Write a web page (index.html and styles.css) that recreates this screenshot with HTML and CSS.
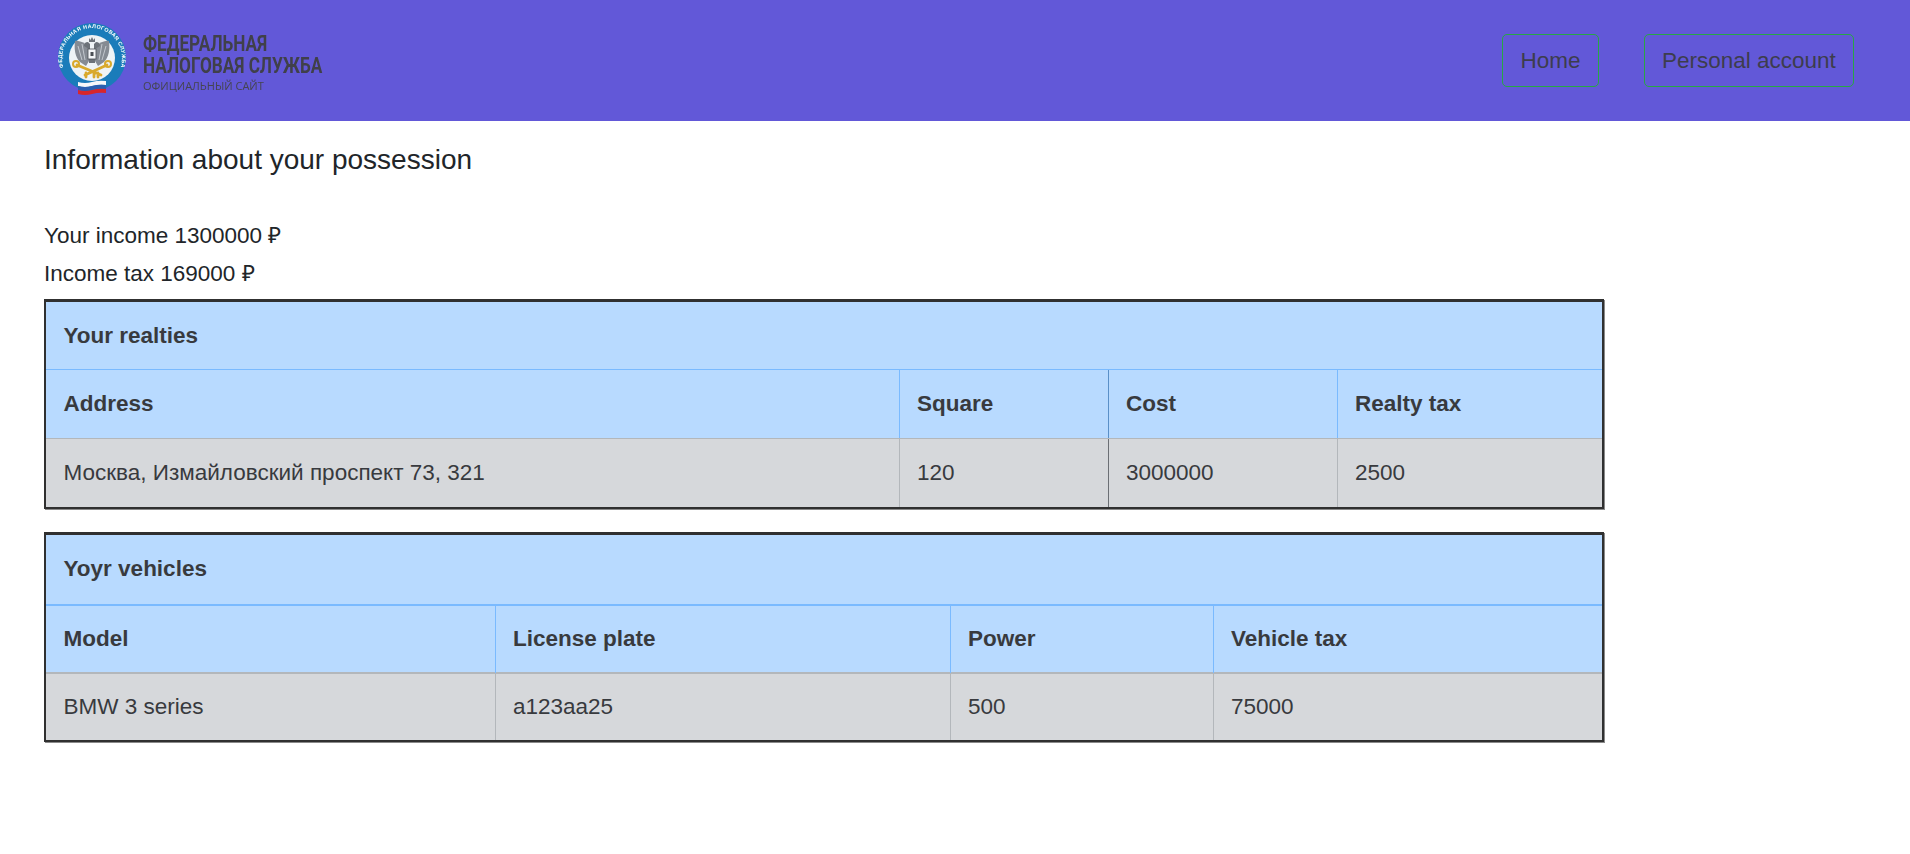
FILE: index.html
```html
<!DOCTYPE html>
<html lang="en">

<head>
    <meta charset="UTF-8">
    <meta name="viewport" content="width=device-width, initial-scale=1.0">
    <title>Information about your possession</title>
    <link rel="stylesheet" href="styles.css">
</head>

<body>
    <header class="header">
        <a class="logo" href="#">
            <svg class="logo-mark" viewBox="0 0 72 76" width="72" height="76" aria-hidden="true">
                <defs>
                    <path id="ringText" d="M14.5 57 A30 30 0 1 1 57.5 57"></path>
                </defs>
                <circle cx="36" cy="35" r="34" fill="#1a7cba"></circle>
                <circle cx="36" cy="36" r="23" fill="#eef3f6"></circle>
                <text class="ring-text"><textPath href="#ringText" startOffset="50%" text-anchor="middle">ФЕДЕРАЛЬНАЯ НАЛОГОВАЯ СЛУЖБА</textPath></text>
                <!-- eagle -->
                <path d="M33 25 C28 20 22 18 19 19 C18 27 19 35 24 40 L30 44 L33 39 Z" fill="#858b93"></path>
                <path d="M39 25 C44 20 50 18 53 19 C54 27 53 35 48 40 L42 44 L39 39 Z" fill="#858b93"></path>
                <path d="M22 24 l4 14 M26 22 l3 16 M50 24 l-4 14 M46 22 l-3 16" fill="none" stroke="#c3c8ce" stroke-width="1"></path>
                <path d="M28 24 q0 -4 4 -4 l2 2 v6 h4 v-6 l2 -2 q4 0 4 4 l-5 3 v14 h-6 v-14 z" fill="#6c7279"></path>
                <path d="M33 16 l1.5 2 l1.5 -3 l1.500 3 l1.500 -2 v4 h-6 z" fill="#6c7279"></path>
                <rect x="32" y="27" width="8" height="10" fill="#f4f6f8" stroke="#4a4f55" stroke-width="0.8"></rect>
                <rect x="34.500" y="30" width="3" height="4" fill="#4a4f55"></rect>
                <!-- keys -->
                <path d="M21 43 l24 10 M51 43 l-22 10 M38 50 v5 M42 51 v4 M30 51 v4" fill="none" stroke="#d9a92c" stroke-width="2.800" stroke-linecap="round"></path>
                <circle cx="20" cy="42" r="3" fill="none" stroke="#d9a92c" stroke-width="2"></circle>
                <circle cx="52" cy="42" r="3" fill="none" stroke="#d9a92c" stroke-width="2"></circle>
                <!-- flag -->
                <path d="M22 60 q7 2 14 0 t14 -1 v4 q-7 -1 -14 1 t-14 0 z" fill="#f7f8fa"></path>
                <path d="M22 64 q7 2 14 0 t14 -1 v4 q-7 -1 -14 1 t-14 0 z" fill="#2b5fb0"></path>
                <path d="M22 68 q7 2 14 0 t14 -1 v4 q-7 -1 -14 1 t-14 0 z" fill="#d8262c"></path>
            </svg>
            <div class="logo-text">
                <span class="logo-title">ФЕДЕРАЛЬНАЯ</span>
                <span class="logo-title">НАЛОГОВАЯ СЛУЖБА</span>
                <span class="logo-sub">ОФИЦИАЛЬНЫЙ САЙТ</span>
            </div>
        </a>
        <nav class="nav">
            <a class="nav-btn" href="#">Home</a>
            <a class="nav-btn" href="#">Personal account</a>
        </nav>
    </header>

    <main class="content">
        <h1 class="page-title">Information about your possession</h1>
        <p class="summary">Your income 1300000 ₽</p>
        <p class="summary">Income tax 169000 ₽</p>

        <table class="tax-table">
            <colgroup>
                <col class="col-address">
                <col class="col-square">
                <col class="col-cost">
                <col class="col-realty">
            </colgroup>
            <thead>
                <tr>
                    <th colspan="4">Your realties</th>
                </tr>
                <tr>
                    <th>Address</th>
                    <th class="dark-edge">Square</th>
                    <th>Cost</th>
                    <th>Realty tax</th>
                </tr>
            </thead>
            <tbody>
                <tr>
                    <td>Москва, Измайловский проспект 73, 321</td>
                    <td class="dark-edge">120</td>
                    <td>3000000</td>
                    <td>2500</td>
                </tr>
            </tbody>
        </table>

        <table class="tax-table tax-table-wide-line">
            <colgroup>
                <col class="col-model">
                <col class="col-plate">
                <col class="col-power">
                <col class="col-vehicle">
            </colgroup>
            <thead>
                <tr>
                    <th colspan="4">Yoyr vehicles</th>
                </tr>
                <tr>
                    <th>Model</th>
                    <th>License plate</th>
                    <th>Power</th>
                    <th>Vehicle tax</th>
                </tr>
            </thead>
            <tbody>
                <tr>
                    <td>BMW 3 series</td>
                    <td>a123aa25</td>
                    <td>500</td>
                    <td>75000</td>
                </tr>
            </tbody>
        </table>
    </main>
</body>
</html>
```

FILE: styles.css
```css
* {
    box-sizing: border-box;
    margin: 0;
    padding: 0;
}

body {
    font-family: "Liberation Sans", Arial, sans-serif;
    font-size: 22.5px;
    line-height: 1.5;
    color: #212529;
    background-color: #fff;
}

a {
    text-decoration: none;
}

/* Header */
.header {
    height: 121px;
    padding: 0 56px 0 56px;
    background-color: #6258d8;
    display: flex;
    align-items: center;
    justify-content: space-between;
}

.logo {
    display: flex;
    align-items: center;
    gap: 15px;
    color: #40404a;
    filter: blur(0.4px);
}

.logo-mark {
    display: block;
    margin-top: -2px;
}

.ring-text {
    font-family: "Liberation Sans", Arial, sans-serif;
    font-size: 5.4px;
    font-weight: bold;
    letter-spacing: 0.35px;
    fill: #fff;
}

.logo-text {
    display: flex;
    flex-direction: column;
    margin-top: 4px;
}

.logo-title {
    font-family: "Roboto", sans-serif;
    font-size: 22px;
    font-weight: 700;
    line-height: 22px;
    transform: scaleX(0.78);
    transform-origin: left center;
    white-space: nowrap;
}

.logo-sub {
    font-family: "Open Sans", sans-serif;
    font-size: 11px;
    line-height: 15px;
    margin-top: 1px;
    color: #45454f;
    white-space: nowrap;
}

.nav {
    display: flex;
    gap: 45px;
}

.nav-btn {
    display: block;
    padding: 8.5px 17.2px;
    color: #3d3d4d;
    border: 1px solid #28a745;
    border-radius: 5px;
}

/* Content */
.content {
    padding: 0 44px;
}

.page-title {
    font-size: 28px;
    font-weight: 400;
    line-height: 42px;
    margin-top: 18px;
    margin-bottom: 36px;
}

.summary {
    line-height: 38px;
}

.tax-table {
    width: 1558px;
    table-layout: fixed;
    border-collapse: collapse;
    border: 2px solid #303030;
    border-top-width: 3px;
    box-shadow: 1px 1px 0 #8a8a8a;
    margin-top: 6px;
    margin-bottom: 23px;
    color: #383a3e;
}

.tax-table th,
.tax-table td {
    height: 69px;
    padding: 0 17.5px;
    text-align: left;
    vertical-align: middle;
}

.tax-table th {
    background-color: #b8daff;
    border: 1px solid #7abaff;
    font-weight: 700;
}

.tax-table td {
    background-color: #d6d8db;
    border: 1px solid #b3b7bb;
}

.tax-table thead tr:last-child th {
    border-bottom-color: #b3b7bb;
}

/* second table has the heavier lines under its header rows */
.tax-table-wide-line tr:first-child th {
    height: 71px;
}

.tax-table-wide-line thead tr:last-child th {
    box-shadow: inset 0 1px 0 #7abaff, inset 0 -1px 0 #b3b7bb;
}

.tax-table-wide-line td {
    height: 68px;
}

th.dark-edge {
    border-right-color: #5a90c8;
}

td.dark-edge {
    border-right-color: #6b6f74;
}

.col-address { width: 854px; }
.col-square { width: 209px; }
.col-cost { width: 229px; }
.col-realty { width: 266px; }

.col-model { width: 450px; }
.col-plate { width: 455px; }
.col-power { width: 263px; }
.col-vehicle { width: 390px; }
```
